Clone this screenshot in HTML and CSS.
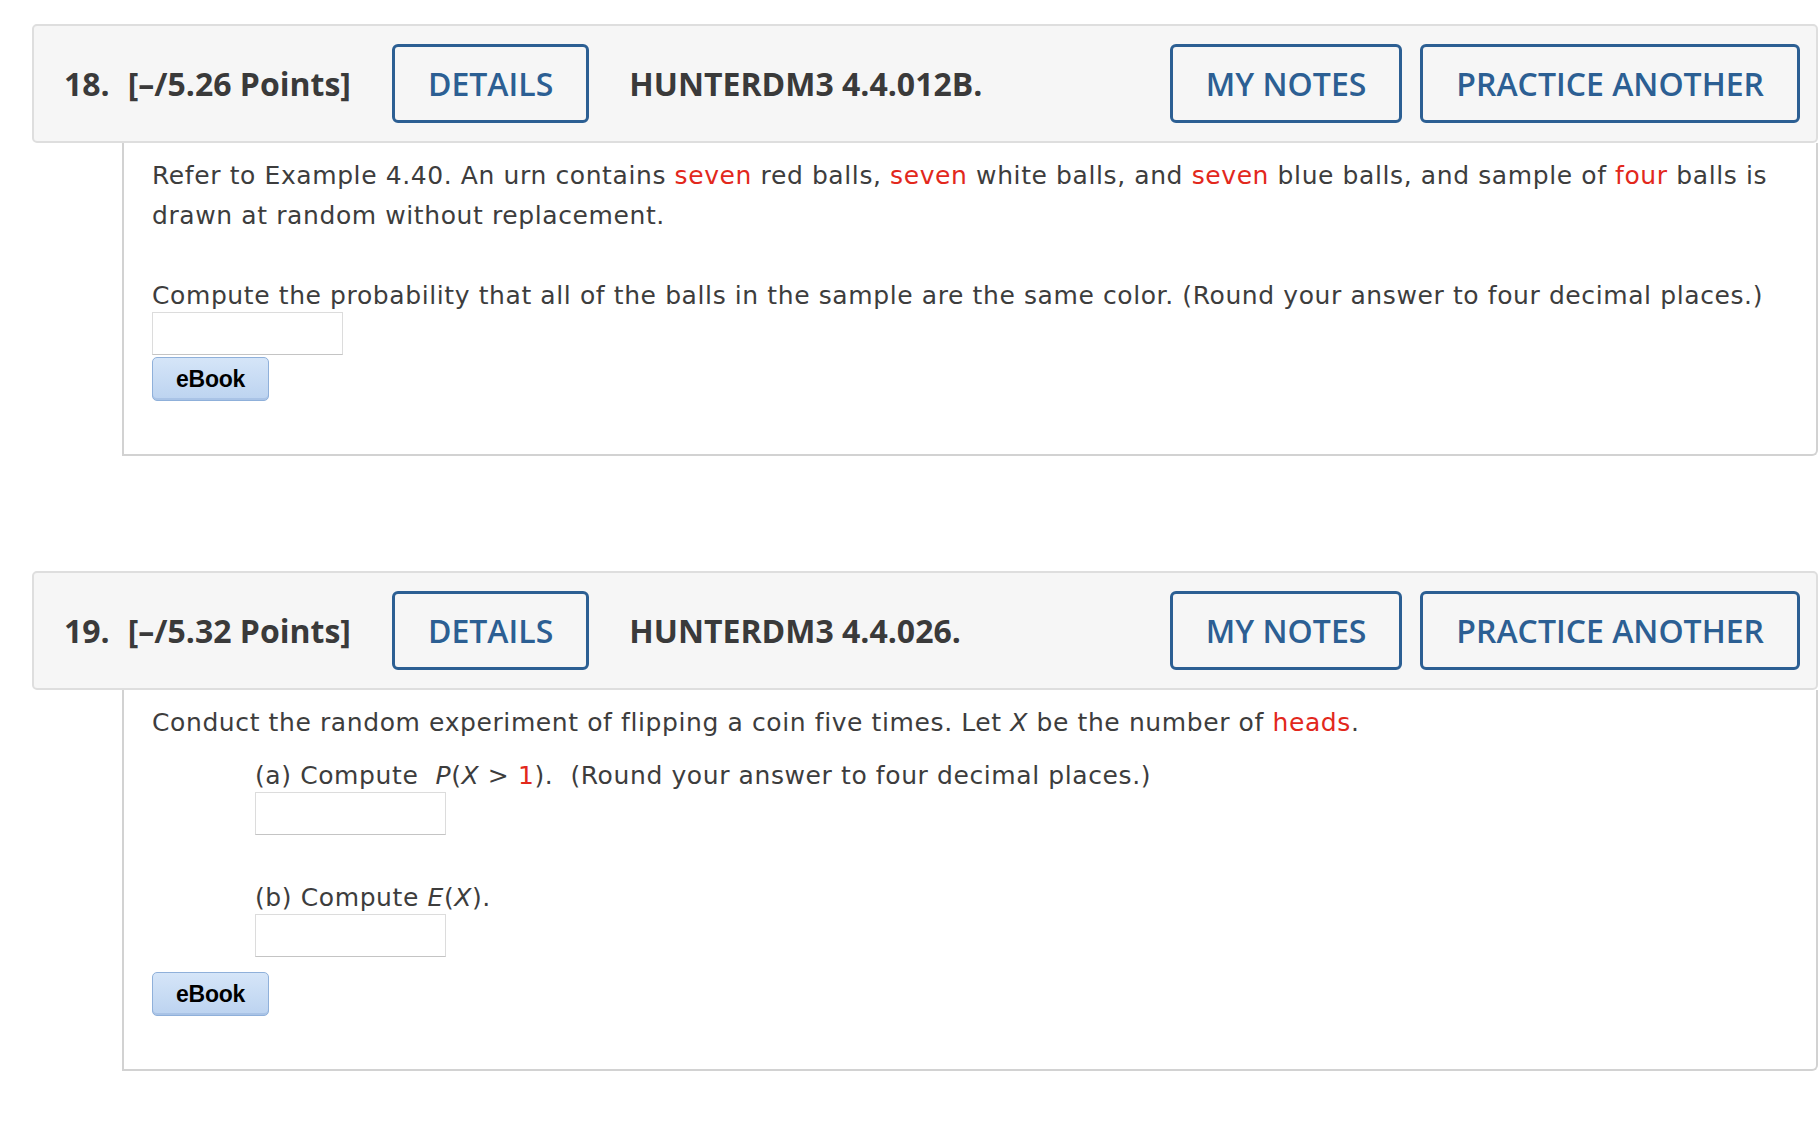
FILE: index.html
```html
<!DOCTYPE html>
<html lang="en">
<head>
<meta charset="utf-8">
<title>Questions</title>
<link rel="stylesheet" href="styles.css">
</head>
<body>
<div class="page">
  <section class="question">
    <header class="q-header">
      <span class="q-num">18.</span>
      <span class="q-points">[–/5.26 Points]</span>
      <button class="btn">DETAILS</button>
      <span class="q-title">HUNTERDM3 4.4.012B.</span>
      <div class="q-actions">
        <button class="btn">MY NOTES</button>
        <button class="btn">PRACTICE ANOTHER</button>
      </div>
    </header>
    <div class="q-body">
      <p class="para">Refer to Example 4.40. An urn contains <span class="red">seven</span> red balls, <span class="red">seven</span> white balls, and <span class="red">seven</span> blue balls, and sample of <span class="red">four</span> balls is drawn at random without replacement.</p>
      <p class="para last">Compute the probability that all of the balls in the sample are the same color. (Round your answer to four decimal places.)</p>
      <input class="answer" type="text">
      <button class="ebook">eBook</button>
    </div>
  </section>

  <section class="question">
    <header class="q-header">
      <span class="q-num">19.</span>
      <span class="q-points">[–/5.32 Points]</span>
      <button class="btn">DETAILS</button>
      <span class="q-title">HUNTERDM3 4.4.026.</span>
      <div class="q-actions">
        <button class="btn">MY NOTES</button>
        <button class="btn">PRACTICE ANOTHER</button>
      </div>
    </header>
    <div class="q-body">
      <p class="para last">Conduct the random experiment of flipping a coin five times. Let <i>X</i> be the number of <span class="red">heads</span>.</p>
      <div class="part">
        <p class="para last">(a) Compute&nbsp; <i>P</i>(<i>X</i> &gt; <span class="red">1</span>).&nbsp; (Round your answer to four decimal places.)</p>
        <input class="answer" type="text">
      </div>
      <div class="part">
        <p class="para last">(b) Compute <i>E</i>(<i>X</i>).</p>
        <input class="answer" type="text">
      </div>
      <button class="ebook ebook-gap">eBook</button>
    </div>
  </section>
</div>
</body>
</html>
```
FILE: styles.css
```css
html, body {
  margin: 0;
  padding: 0;
  background: #ffffff;
}

.page {
  padding: 24px 0 0 32px;
}

.question {
  width: 1786px;
  margin-bottom: 115px;
}

.question:last-child {
  margin-bottom: 0;
}

.q-header {
  display: flex;
  align-items: center;
  height: 119px;
  box-sizing: border-box;
  border: 2px solid #dedede;
  border-radius: 5px;
  background: #f6f6f6;
  padding: 0 16px 0 30px;
  font-family: "Open Sans", "DejaVu Sans", sans-serif;
  color: #3a3a3a;
}

.q-num {
  font-size: 32px;
  font-weight: 700;
  margin-right: 18px;
}

.q-points {
  font-size: 32px;
  font-weight: 700;
  margin-right: 41px;
}

.q-title {
  font-size: 32px;
  font-weight: 700;
  margin-left: 40px;
}

.q-actions {
  display: flex;
  gap: 18px;
  margin-left: auto;
}

.btn {
  display: flex;
  align-items: center;
  height: 79px;
  box-sizing: border-box;
  border: 3px solid #2c5f93;
  border-radius: 6px;
  background: transparent;
  color: #2c5f93;
  font-family: "Open Sans", sans-serif;
  font-size: 32px;
  font-weight: 600;
  padding: 0 33px;
  margin: 0;
}

.q-body {
  margin-left: 90px;
  border: 2px solid #d2d2d2;
  border-top: none;
  border-radius: 0 0 6px 0;
  padding: 13px 28px 53px 28px;
  font-family: "DejaVu Sans", Verdana, sans-serif;
  font-size: 25px;
  letter-spacing: 0.6px;
  line-height: 40px;
  color: #3d3d3d;
}

.para {
  margin: 0 0 40px 0;
}

.para.last {
  margin-bottom: 0;
}

.red {
  color: #e2281c;
}

.answer {
  display: block;
  width: 191px;
  height: 43px;
  box-sizing: border-box;
  border: 1px solid #dcdcdc;
  border-bottom-color: #c4c4c4;
  background: #ffffff;
  margin: -4px 0 0 0;
  padding: 0;
}

.ebook {
  display: block;
  width: 117px;
  height: 44px;
  box-sizing: border-box;
  margin-top: 2px;
  border: 1px solid #8fb0da;
  border-radius: 5px;
  background: linear-gradient(#d5e5f8, #bcd3f0);
  box-shadow: inset 0 -2px 0 #a9c3e6;
  font-family: "Liberation Sans", Arial, sans-serif;
  font-size: 23px;
  letter-spacing: -0.3px;
  font-weight: 700;
  color: #000000;
  padding: 0;
}

.ebook-gap {
  margin-top: 15px;
}

.part {
  margin-left: 103px;
  margin-top: 13px;
}

.part + .part {
  margin-top: 43px;
}
```
